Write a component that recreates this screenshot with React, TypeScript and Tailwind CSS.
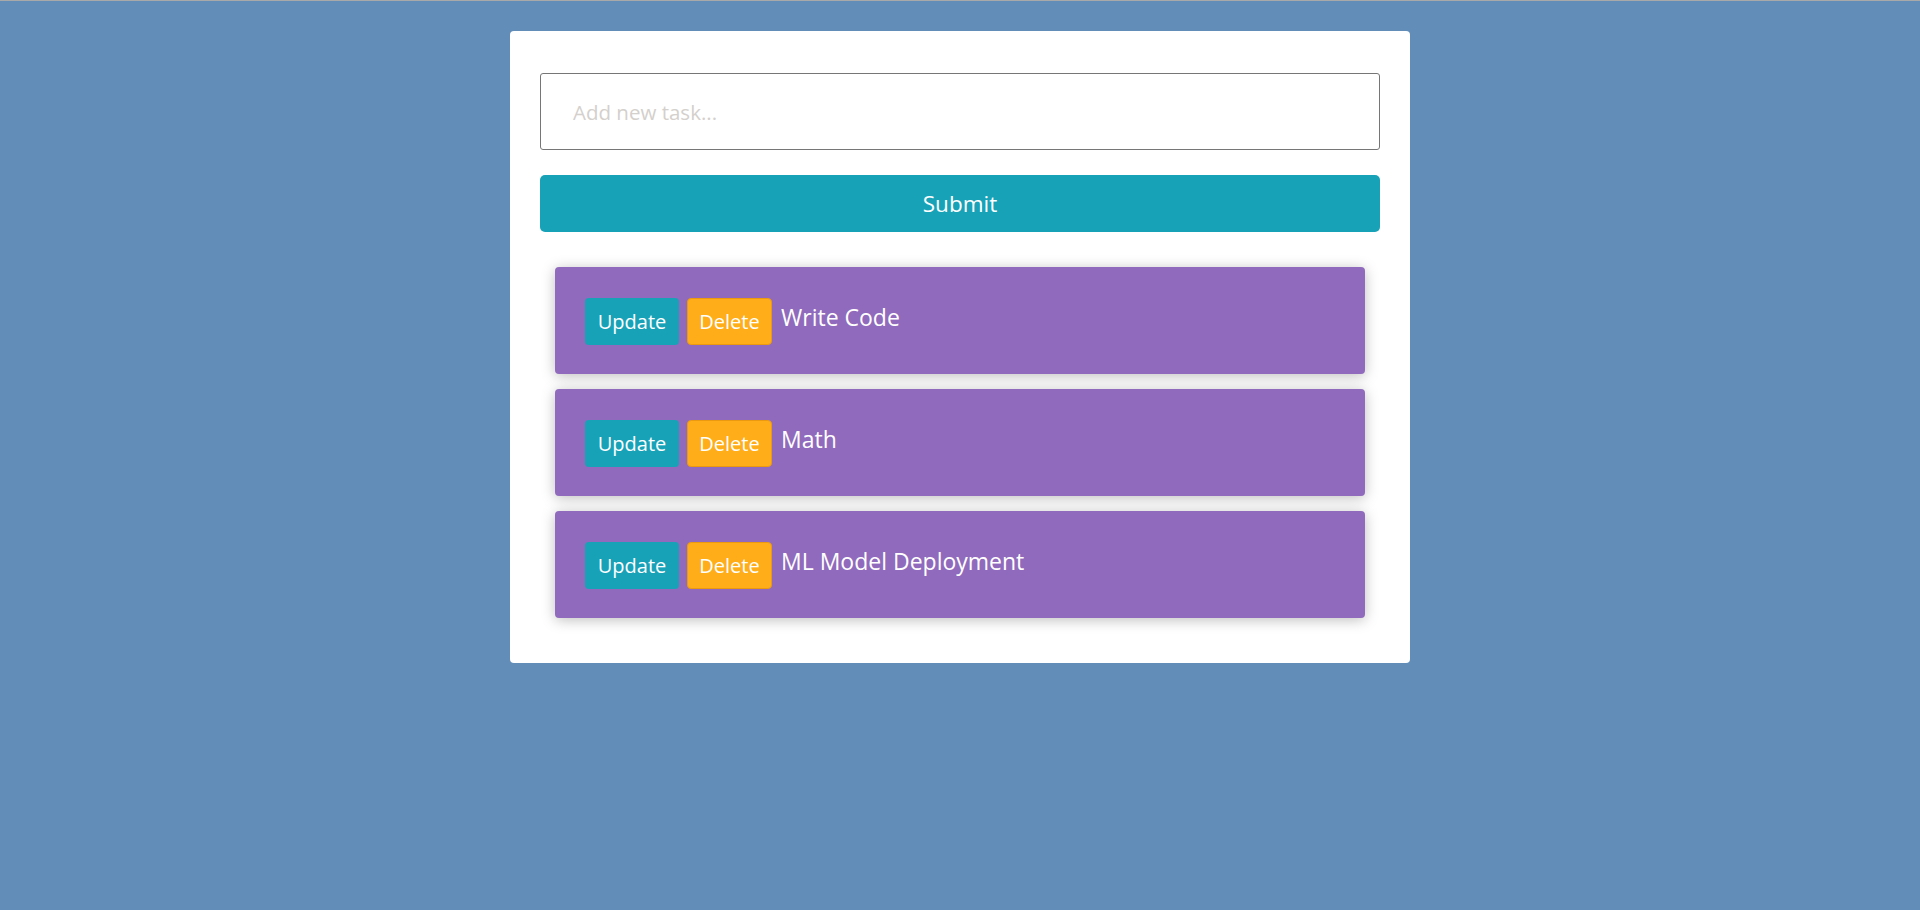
import { useState } from 'react';

const font = { fontFamily: '"Open Sans", "Noto Sans", sans-serif' };

export default function App() {
  const [tasks] = useState(['Write Code', 'Math', 'ML Model Deployment']);
  const [text, setText] = useState('');

  return (
    <div
      className="min-h-screen w-full bg-[#628db9] border-t border-[#a9a9a9] pt-[30px]"
      style={font}
    >
      <div className="mx-auto w-[900px] bg-white rounded-[4px] px-[30px] pt-[42px] pb-[45px]">
        <input
          value={text}
          onChange={(e) => setText(e.target.value)}
          placeholder="Add new task..."
          className="block w-full h-[77px] border border-[#767676] rounded-[3px] pl-[32px] text-[20.5px] text-gray-800 placeholder:text-[#d4d0cc] outline-none"
        />
        <button className="mt-[25px] w-full h-[57px] rounded-[5px] bg-[#17a2b8] text-white text-[22.5px]">
          Submit
        </button>

        {/* task list */}
        <div className="mt-[35px] px-[15px] flex flex-col gap-[15px]">
          {tasks.map((t) => (
            <div
              key={t}
              className="h-[107px] rounded-[4px] bg-[#906abc] shadow-[0_2px_14px_rgba(0,0,0,0.26)] pl-[30px] pt-[31px] flex items-start"
            >
              <button className="h-[47px] w-[94px] rounded-[4px] bg-[#17a2b8] text-white text-[20px]">
                Update
              </button>
              <button className="ml-[8px] h-[47px] w-[85px] rounded-[4px] bg-[#ffad19] border border-[#eb9a10] text-white text-[20px]">
                Delete
              </button>
              <span className="ml-[9px] mt-[4px] leading-[30px] text-[23px] text-white">{t}</span>
            </div>
          ))}
        </div>
      </div>
    </div>
  );
}
